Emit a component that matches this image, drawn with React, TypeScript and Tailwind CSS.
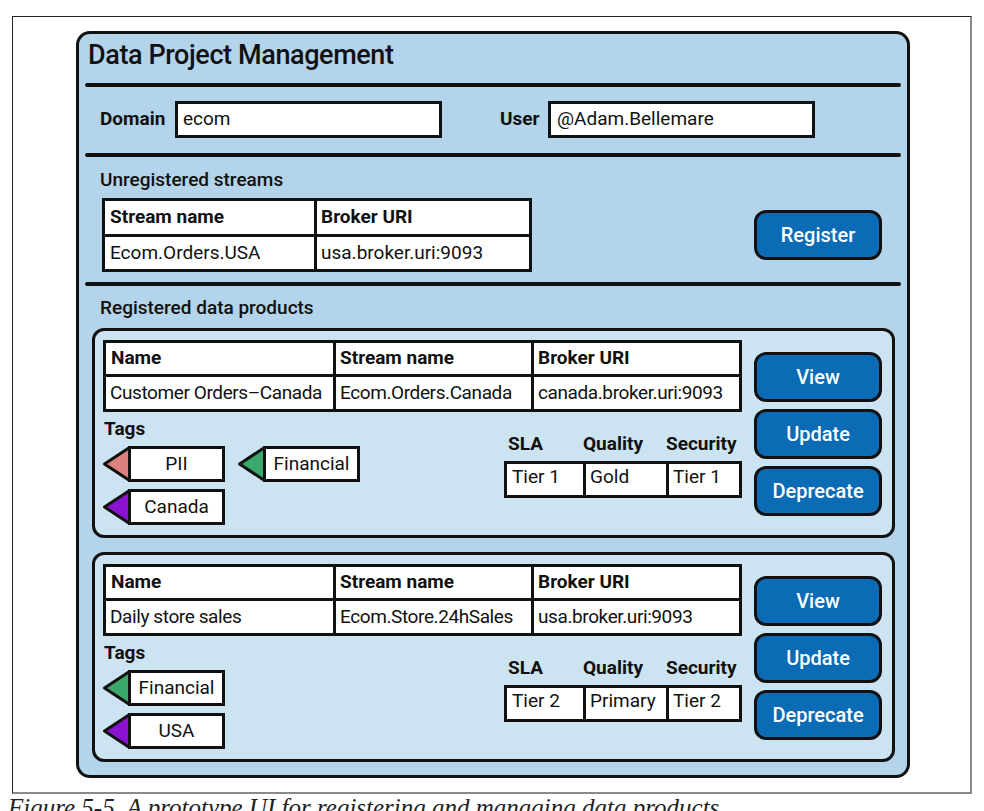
import React from "react";

const ink = "#111111";

function Divider() {
  return <div className="mx-[6px] h-[4px] rounded-full bg-[#111]" />;
}

function Btn({ label, className = "" }: { label: string; className?: string }) {
  return (
    <div
      className={
        "flex h-[50px] w-[128px] items-center justify-center rounded-[12px] border-[3px] border-[#111] bg-[#0b6cb5] text-[20px] font-medium text-white " +
        className
      }
    >
      {label}
    </div>
  );
}

function Tag({ label, color }: { label: string; color: string }) {
  return (
    <div className="flex h-[36px] items-stretch">
      <svg width="28" height="36" viewBox="0 0 28 36" className="block">
        <polygon
          points="26.5,1.5 1.5,18 26.5,34.5"
          fill={color}
          stroke={ink}
          strokeWidth="3"
          strokeLinejoin="round"
        />
      </svg>
      <div className="-ml-[3px] flex h-[36px] w-[97px] items-center justify-center border-[3px] border-[#111] bg-white text-[19px]">
        {label}
      </div>
    </div>
  );
}

type Product = {
  name: string;
  stream: string;
  broker: string;
  tags: { label: string; color: string }[][];
  sla: string;
  quality: string;
  security: string;
};

function ProductCard({ p }: { p: Product }) {
  return (
    <div className="flex h-[210px] rounded-[12px] border-[3px] border-[#111] bg-[#cce3f2] pt-[9px] pl-[8px] pr-[10px]">
      <div className="flex w-[639px] flex-col">
        <div className="flex flex-col border-[3px] border-[#111] bg-white">
          <div className="flex h-[34px] border-b-[3px] border-[#111] font-bold">
            <div className="flex w-[230px] items-center border-r-[3px] border-[#111] pl-[5px]">Name</div>
            <div className="flex w-[198px] items-center border-r-[3px] border-[#111] pl-[4px]">Stream name</div>
            <div className="flex flex-1 items-center pl-[4px]">Broker URI</div>
          </div>
          <div className="flex h-[32px] tracking-[-0.4px]">
            <div className="flex w-[230px] items-center border-r-[3px] border-[#111] pl-[4px] whitespace-nowrap">{p.name}</div>
            <div className="flex w-[198px] items-center border-r-[3px] border-[#111] pl-[4px] whitespace-nowrap">{p.stream}</div>
            <div className="flex flex-1 items-center pl-[4px] whitespace-nowrap">{p.broker}</div>
          </div>
        </div>
        <div className="flex justify-between">
          <div className="mt-[6px] flex flex-col">
            <div className="h-[22px] pl-[1px] text-[19px] font-bold leading-[22px]">Tags</div>
            <div className="mt-[6px] flex flex-col gap-[7px]">
              {p.tags.map((row, i) => (
                <div key={i} className="flex gap-[13px]">
                  {row.map((t) => (
                    <Tag key={t.label} label={t.label} color={t.color} />
                  ))}
                </div>
              ))}
            </div>
          </div>
          <div className="mt-[21px] flex w-[238px] flex-col">
            <div className="flex h-[22px] font-bold leading-[22px]">
              <div className="w-[79px] pl-[4px]">SLA</div>
              <div className="w-[83px]">Quality</div>
              <div className="flex-1">Security</div>
            </div>
            <div className="mt-[6px] flex h-[37px] border-[3px] border-[#111] bg-white leading-[26px]">
              <div className="w-[79px] border-r-[3px] border-[#111] pl-[5px]">{p.sla}</div>
              <div className="w-[83px] border-r-[3px] border-[#111] pl-[4px]">{p.quality}</div>
              <div className="flex-1 pl-[4px]">{p.security}</div>
            </div>
          </div>
        </div>
      </div>
      <div className="ml-[12px] mt-[12px] flex flex-col gap-[7px]">
        <Btn label="View" />
        <Btn label="Update" />
        <Btn label="Deprecate" />
      </div>
    </div>
  );
}

const products: Product[] = [
  {
    name: "Customer Orders–Canada",
    stream: "Ecom.Orders.Canada",
    broker: "canada.broker.uri:9093",
    tags: [
      [
        { label: "PII", color: "#dd8080" },
        { label: "Financial", color: "#3aa86b" },
      ],
      [{ label: "Canada", color: "#8c12d2" }],
    ],
    sla: "Tier 1",
    quality: "Gold",
    security: "Tier 1",
  },
  {
    name: "Daily store sales",
    stream: "Ecom.Store.24hSales",
    broker: "usa.broker.uri:9093",
    tags: [[{ label: "Financial", color: "#3aa86b" }], [{ label: "USA", color: "#8c12d2" }]],
    sla: "Tier 2",
    quality: "Primary",
    security: "Tier 2",
  },
];

export default function App() {
  return (
    <div className="h-[811px] w-[984px] overflow-hidden bg-white font-['Roboto','Noto_Sans',sans-serif] text-[19px] text-[#111]">
      <div className="ml-[12px] mt-[16px] h-[778px] w-[960px] border-l border-t border-r-2 border-b-2 border-l-[#222] border-t-[#222] border-r-[#8a8a8a] border-b-[#8a8a8a] bg-white">
        <div className="ml-[63px] mt-[14px] flex h-[747px] w-[834px] flex-col rounded-[14px] border-[3px] border-[#111] bg-[#b3d4eb]">
          <div className="h-[49px] pl-[9px] pt-[5px] text-[27px] font-medium leading-[32px] tracking-[-0.4px]">Data Project Management</div>
          <Divider />
          <div className="flex h-[66px] items-start pl-[21px] pt-[14px]">
            <div className="flex h-[37px] items-center">
              <span className="w-[75px] font-bold">Domain</span>
              <div className="flex h-[37px] w-[267px] items-center border-[3px] border-[#111] bg-white pl-[5px]">ecom</div>
            </div>
            <div className="ml-[58px] flex h-[37px] items-center">
              <span className="w-[48px] font-bold">User</span>
              <div className="flex h-[37px] w-[267px] items-center border-[3px] border-[#111] bg-white pl-[6px]">@Adam.Bellemare</div>
            </div>
          </div>
          <Divider />
          <div className="mt-[11px] h-[24px] pl-[21px] font-medium leading-[24px]">Unregistered streams</div>
          <div className="mb-[10px] mt-[6px] flex items-center pl-[23px] pr-[25px]">
            <div className="flex w-[430px] flex-col border-[3px] border-[#111] bg-white">
              <div className="flex h-[36px] border-b-[3px] border-[#111] font-bold">
                <div className="flex w-[212px] items-center border-r-[3px] border-[#111] pl-[5px]">Stream name</div>
                <div className="flex flex-1 items-center pl-[4px]">Broker URI</div>
              </div>
              <div className="flex h-[32px]">
                <div className="flex w-[212px] items-center border-r-[3px] border-[#111] pl-[5px]">Ecom.Orders.USA</div>
                <div className="flex flex-1 items-center pl-[4px]">usa.broker.uri:9093</div>
              </div>
            </div>
            <Btn label="Register" className="ml-auto" />
          </div>
          <Divider />
          <div className="mt-[10px] h-[24px] pl-[21px] font-medium leading-[24px]">Registered data products</div>
          <div className="ml-[13px] mr-[12px] mt-[8px] flex flex-col gap-[14px]">
            {products.map((p) => (
              <ProductCard key={p.name} p={p} />
            ))}
          </div>
        </div>
      </div>
      <div className="mt-[0px] pl-[8px] font-['Liberation_Serif',serif] text-[25px] italic leading-[28px] text-[#222] whitespace-nowrap">
        Figure 5-5. A prototype UI for registering and managing data products
      </div>
    </div>
  );
}
